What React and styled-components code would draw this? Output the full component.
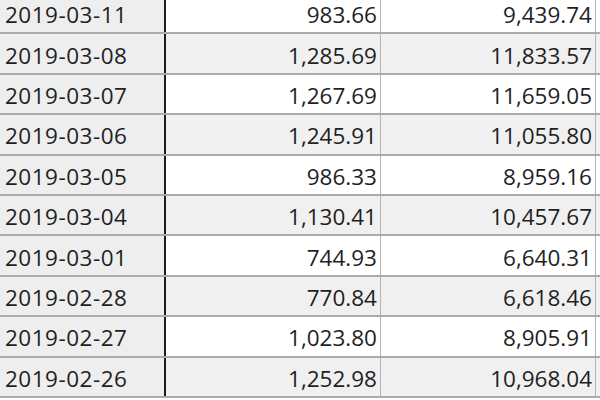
import React from "react";
import styled, { createGlobalStyle } from "styled-components";

const GlobalStyle = createGlobalStyle`
  html, body {
    margin: 0;
    padding: 0;
    background: #ffffff;
    overflow: hidden;
  }
`;

const Sheet = styled.div`
  width: 600px;
  height: 400px;
  overflow: hidden;
  font-family: "Open Sans", "Liberation Sans", sans-serif;
  font-size: 22.5px;
  color: #1f1f1f;
`;

const Grid = styled.div`
  margin-top: -6px;
  display: flex;
  flex-direction: column;
`;

const Row = styled.div`
  display: grid;
  grid-template-columns: 166px 215px 215px 1fr;
  height: 40.4px;
  box-sizing: border-box;
  border-bottom: 2px solid #ababab;
  background: ${(p) => (p.$shaded ? "#f0f0f0" : "#ffffff")};
`;

const Cell = styled.div`
  display: flex;
  align-items: center;
  justify-content: flex-end;
  padding: 3px 3px 0 0;
  box-sizing: border-box;
  white-space: nowrap;
  border-right: 1px solid #b4b4b4;
`;

const DateCell = styled(Cell)`
  justify-content: flex-start;
  padding: 3px 0 0 5px;
  letter-spacing: 0.5px;
  background: #eeeeee;
  border-right: 2px solid #1c1c1c;
`;

const Filler = styled.div``;

const rows = [
  ["2019-03-11", "983.66", "9,439.74"],
  ["2019-03-08", "1,285.69", "11,833.57"],
  ["2019-03-07", "1,267.69", "11,659.05"],
  ["2019-03-06", "1,245.91", "11,055.80"],
  ["2019-03-05", "986.33", "8,959.16"],
  ["2019-03-04", "1,130.41", "10,457.67"],
  ["2019-03-01", "744.93", "6,640.31"],
  ["2019-02-28", "770.84", "6,618.46"],
  ["2019-02-27", "1,023.80", "8,905.91"],
  ["2019-02-26", "1,252.98", "10,968.04"],
];

const App = () => {
  return (
    <Sheet>
      <GlobalStyle />
      <Grid>
        {rows.map((r, i) => (
          <Row key={r[0]} $shaded={i % 2 === 1}>
            <DateCell>{r[0]}</DateCell>
            <Cell>{r[1]}</Cell>
            <Cell>{r[2]}</Cell>
            <Filler />
          </Row>
        ))}
      </Grid>
    </Sheet>
  );
};

export default App;
